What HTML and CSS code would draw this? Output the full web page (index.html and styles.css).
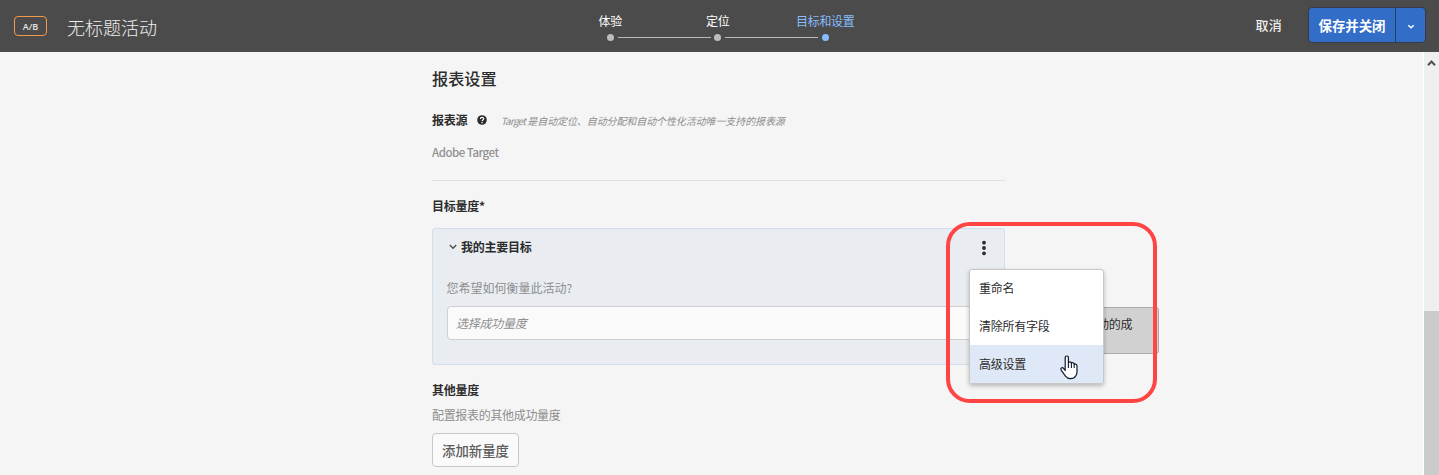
FILE: index.html
```html
<!DOCTYPE html>
<html lang="zh-CN">
<head>
<meta charset="utf-8">
<title>无标题活动</title>
<link rel="stylesheet" href="styles.css">
</head>
<body>
<header class="topbar">
  <span class="badge">A/B</span>
  <h1 class="title">无标题活动</h1>
  <ol class="steps">
    <li class="step"><span class="step-label">体验</span><i class="dot"></i></li>
    <li class="step"><span class="step-label">定位</span><i class="dot"></i></li>
    <li class="step active"><span class="step-label">目标和设置</span><i class="dot"></i></li>
  </ol>
  <div class="actions">
    <span class="cancel">取消</span>
    <div class="save">
      <span class="save-main">保存并关闭</span>
      <span class="save-more"><svg width="8" height="6" viewBox="0 0 8 6"><path d="M1.3 1.3 4 3.8 6.7 1.3" fill="none" stroke="#fff" stroke-width="1.4"/></svg></span>
    </div>
  </div>
</header>
<div class="body">
  <main class="content">
    <h2 class="heading">报表设置</h2>
    <div class="source-row">
      <span class="label">报表源</span>
      <svg class="help" width="10" height="10" viewBox="0 0 10 10"><circle cx="5" cy="5" r="4.8" fill="#2c2c2c"/><path d="M3.4 3.9C3.4 2 6.7 2 6.7 3.8 6.7 4.9 5.1 4.9 5.1 6.1" fill="none" stroke="#fff" stroke-width="1.2"/><rect x="4.4" y="6.9" width="1.3" height="1.3" fill="#fff"/></svg>
      <em class="note"><span class="product">Target</span> 是自动定位、自动分配和自动个性化活动唯一支持的报表源</em>
    </div>
    <p class="source">Adobe Target</p>
    <hr class="rule">
    <h3 class="label goal-label">目标量度*</h3>
    <section class="card">
      <div class="card-head">
        <svg width="8" height="6" viewBox="0 0 8 6"><path d="M.8 1 4 4.3 7.2 1" fill="none" stroke="#4b4b4b" stroke-width="1.3"/></svg>
        <span class="label">我的主要目标</span>
        <svg class="kebab" width="4" height="16" viewBox="0 0 4 16"><g fill="#2c2c2c"><circle cx="2" cy="2.7" r="1.9"/><circle cx="2" cy="8" r="1.9"/><circle cx="2" cy="13.3" r="1.9"/></g></svg>
      </div>
      <p class="question">您希望如何衡量此活动?</p>
      <div class="field">选择成功量度</div>
      <div class="tip">动的成</div>
      <div class="menu">
        <div class="item">重命名</div>
        <div class="item">清除所有字段</div>
        <div class="item hover">高级设置</div>
      </div>
      <svg class="cursor" width="18" height="25" viewBox="0 0 18 25"><path d="M5.2 15.5V2.8Q5.2 1 6.8 1T8.4 2.8V8Q8.7 6.8 9.9 6.9 11.3 7 11.4 8.3 11.8 7.5 12.8 7.7 14.1 7.9 14.2 9.3 14.8 8.7 15.7 9.1 17 9.5 17 11V17Q17 19 15.8 20.8 14.2 23.7 10.7 23.7 7.3 23.7 5.5 21.2L1.3 15.3Q.5 13.8 1.4 13 2.6 12.2 3.8 13.6Z" fill="#fff" stroke="#111a2c" stroke-width="1.2" stroke-linejoin="round"/><path d="M8.4 7.5V13M11.4 8V13M14.2 9V13" fill="none" stroke="#111a2c" stroke-width="1.1"/></svg>
      <div class="ring"></div>
    </section>
    <h3 class="label other">其他量度</h3>
    <p class="other-text">配置报表的其他成功量度</p>
    <span class="add">添加新量度</span>
  </main>
  <aside class="scroll">
    <svg width="9" height="8" viewBox="0 0 9 8"><path d="M1 6.2 4.5 2.5 8 6.2" fill="none" stroke="#505050" stroke-width="2"/></svg>
    <div class="thumb"></div>
  </aside>
</div>
</body>
</html>
```

FILE: styles.css
```css
* { box-sizing: border-box; }
body, h1, h2, h3, p, ol { margin: 0; padding: 0; }
body {
  height: 475px;
  overflow: hidden;
  background: #f5f5f5;
  color: #2c2c2c;
  font: 12px/18px "Noto Sans CJK SC", sans-serif;
  letter-spacing: -0.27px;
}
svg { display: block; flex: none; }
.topbar {
  position: relative;
  display: flex;
  align-items: flex-start;
  height: 52px;
  background: #4b4b4b;
  color: #fff;
}
.badge {
  width: 33px;
  height: 20px;
  margin: 16px 0 0 14px;
  border: 1px solid #f29a4a;
  border-radius: 4px;
  color: #e4e4e4;
  font: 600 9px/19px "Open Sans", sans-serif;
  letter-spacing: 0;
  text-align: center;
}
.title {
  width: 489.5px;
  margin: 14px 0 0 20px;
  color: #eee;
  font-size: 18px;
  font-weight: 300;
  line-height: 26px;
  letter-spacing: 0;
}
.steps { display: flex; margin-top: 12px; list-style: none; }
.step {
  position: relative;
  display: flex;
  flex-direction: column;
  align-items: center;
  width: 107.5px;
}
.step + .step::before {
  content: "";
  position: absolute;
  right: calc(50% + 7px);
  top: 25px;
  width: 93px;
  height: 1px;
  background: #b9b9b9;
}
.dot { width: 7px; height: 7px; margin-top: 4px; border-radius: 50%; background: #bdbdbd; }
.active { color: #87bdff; }
.active .dot { background: #87bdff; }
.actions {
  display: flex;
  align-items: flex-start;
  margin: 7px 13px 0 auto;
}
.cancel { margin: 8px 26px 0 0; color: #eee; font-size: 13px; font-weight: 500; line-height: 19px; letter-spacing: 0.2px; }
.save {
  display: flex;
  height: 36px;
  border: 1px solid #343a46;
  border-radius: 4px;
  background: #326ec8;
}
.save-main { width: 86px; text-align: center; font-size: 13.4px; font-weight: 700; line-height: 35px; letter-spacing: 0; }
.save-more {
  display: flex;
  align-items: center;
  justify-content: center;
  width: 30px;
  border-left: 1px solid #2b3d5c;
  padding-top: 4px;
}
.body { display: flex; justify-content: space-between; height: 423px; }
.content { width: 573px; margin-left: 432px; padding-top: 14px; }
.heading { font-size: 16.2px; font-weight: 500; line-height: 24px; letter-spacing: 0; }
.label { font-size: 12px; font-weight: 700; line-height: 18px; }
.source-row { display: flex; align-items: center; height: 18px; margin-top: 21px; }
.help { margin-left: 10px; }
.note { margin: 1px 0 0 13.5px; color: #8e8e8e; font-size: 10px; letter-spacing: -0.1px; white-space: nowrap; }
.product { letter-spacing: -0.8px; }
.source { margin-top: 14px; color: #919191; font-size: 11.5px; font-weight: 500; letter-spacing: -0.5px; }
.rule { height: 1px; margin: 19px 0 0; border: 0; background: #e0e0e0; }
.goal-label { margin-top: 16px; }
.card {
  position: relative;
  height: 137px;
  margin-top: 13px;
  border: 1px solid #d3deec;
  border-radius: 3px;
  background: #e9edf2;
}
.card-head { display: flex; align-items: center; gap: 4px; padding: 7px 18px 0 16px; height: 28px; }
.kebab { margin: 2px 0 0 auto; }
.question { margin: 22px 0 0 13.5px; color: #8e8e8e; letter-spacing: 0; }
.field {
  height: 34px;
  margin: 9px 14px 0;
  padding-left: 8px;
  border: 1px solid #cfcfcf;
  border-radius: 4px;
  background: #fafafa;
  color: #8e8e8e;
  font-style: italic;
  line-height: 31px;
}
.tip {
  position: absolute;
  left: 636px;
  top: 78px;
  width: 90px;
  height: 47px;
  padding: 7px 0 0 27px;
  border: 1px solid #aaa;
  border-radius: 3px;
  background: #d1d1d1;
}
.menu {
  position: absolute;
  left: 536px;
  top: 40px;
  width: 135px;
  height: 115px;
  border: 1px solid #c8c8c8;
  border-radius: 3px;
  background: #fff;
  box-shadow: 0 2px 4px rgba(0,0,0,.25);
}
.item { height: 38px; padding-left: 9px; line-height: 36px; }
.item.hover { height: 38px; margin-top: -1px; padding-top: 1px; background: #dfe8f6; border-radius: 0 0 2px 2px; }
.cursor { position: absolute; left: 627px; top: 126px; }
.ring {
  position: absolute;
  left: 513px;
  top: -7px;
  width: 211px;
  height: 181px;
  border: 4px solid #ff4444;
  border-radius: 24px;
}
.other { margin-top: 16px; }
.other-text { margin-top: 7px; color: #8e8e8e; letter-spacing: -0.32px; }
.add {
  display: block;
  width: 87px;
  height: 34px;
  margin-top: 9px;
  border: 1px solid #c8c8c8;
  border-radius: 4px;
  background: #fafafa;
  color: #5c5c5c;
  font-size: 13.4px;
  font-weight: 500;
  line-height: 33px;
  letter-spacing: 0;
  text-align: center;
}
.scroll {
  display: flex;
  flex-direction: column;
  align-items: center;
  justify-content: space-between;
  width: 16px;
  border-left: 1px solid #fff;
  padding-top: 7px;
  background: #efefef;
}
.thumb { width: 15px; height: 164px; background: #cbcbcb; }
```
